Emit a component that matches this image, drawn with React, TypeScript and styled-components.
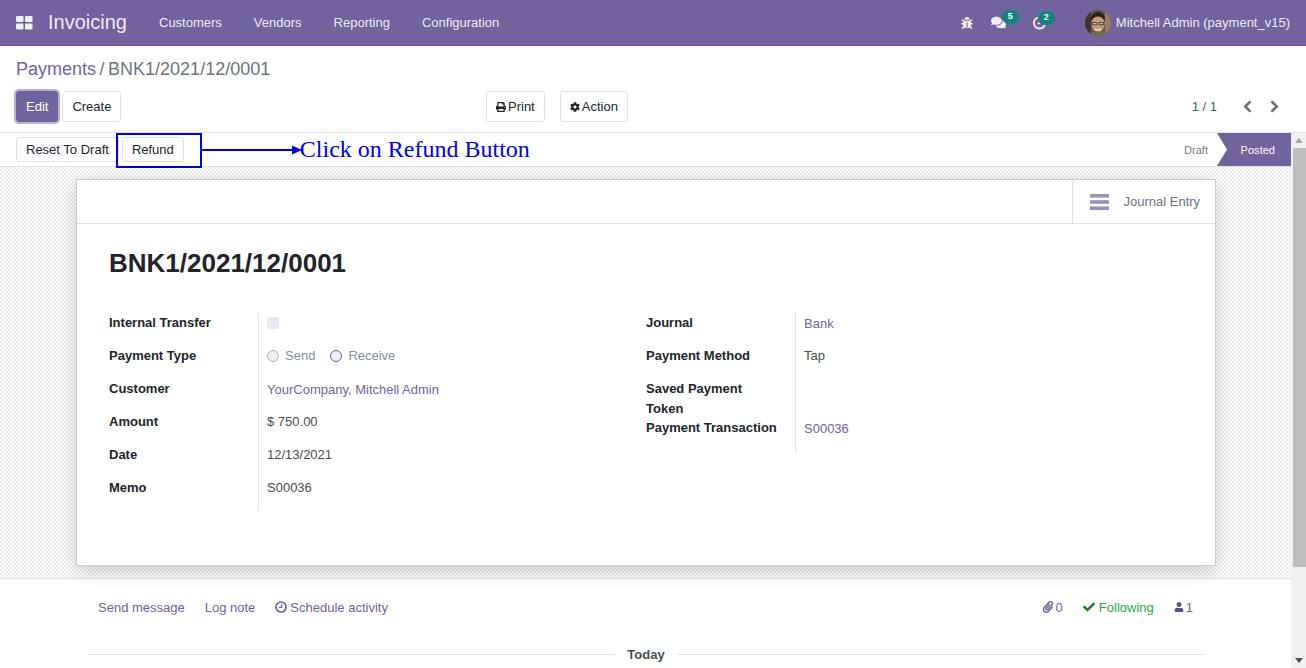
import React from "react";
import styled, { createGlobalStyle } from "styled-components";
import { FaBug, FaComments, FaPrint, FaCog, FaCheck, FaUser, FaPaperclip, FaChevronLeft, FaChevronRight } from "react-icons/fa";

const Global = createGlobalStyle`
  html, body { margin: 0; padding: 0; height: 100%; overflow: hidden; background: #fff; }
  body { font-family: "Liberation Sans", Arial, sans-serif; font-size: 13px; color: #4c4c4c; }
  * { box-sizing: border-box; }
`;

const Page = styled.div`width: 1306px; height: 668px; display: flex; flex-direction: column; overflow: hidden;`;

const Nav = styled.header`
  height: 46px; flex: none; background: #71639e; border-bottom: 1px solid #5f5286;
  display: flex; align-items: center; color: #fff; padding-left: 16px;
`;
const Brand = styled.span`font-size: 20px; color: rgba(255,255,255,.9); margin-left: 15px; margin-right: 32px; width: 79px;`;
const NavLink = styled.span`font-size: 13px; color: rgba(255,255,255,.9); margin-right: 32px;`;
const NavRight = styled.div`margin-left: auto; display: flex; align-items: center; padding-right: 16px; font-size: 13px;`;
const NavIcon = styled.span<{ $w: number }>`position: relative; display: inline-flex; align-items: center; width: ${p => p.$w}px; color: #f1eef7;`;
const Badge = styled.span<{ $left: number }>`
  position: absolute; left: ${p => p.$left}px; top: -5px; width: 17px; height: 14px; border-radius: 7px;
  background: #14827e; color: #fff; font-size: 9px; font-weight: 700; line-height: 13px; text-align: center;
`;
const Avatar = styled.svg`border-radius: 50%; margin-right: 5px; flex: none;`;
const UserName = styled.span`color: rgba(255,255,255,.9);`;

const Control = styled.section`
  height: 87px; flex: none; padding: 12px 16px 0; border-bottom: 1px solid #dee2e6; background: #fff;
`;
const Crumbs = styled.div`font-size: 18px; line-height: 22px; color: #6c757d; display: flex; gap: 3.5px;`;
const CrumbLink = styled.span`color: #71639e;`;
const CtlRow = styled.div`display: grid; grid-template-columns: 470px 1fr 1fr; margin-top: 11px; align-items: center;`;
const Group = styled.div`display: flex; align-items: center; gap: 4px;`;
const Actions = styled.div`display: flex; gap: 15px;`;
const Btn = styled.button<{ $primary?: boolean }>`
  height: 31px; padding: 0 9px; font: inherit; font-size: 13px; border-radius: 3px; display: inline-flex; align-items: center; gap: 2px;
  background: ${p => p.$primary ? "#71639e" : "#fff"};
  color: ${p => p.$primary ? "#fff" : "#212529"};
  border: 1px solid ${p => p.$primary ? "#71639e" : "#dee2e6"};
  box-shadow: ${p => p.$primary ? "0 0 0 2px #b8b1cf" : "none"};
`;
const Pager = styled.div`display: flex; justify-content: flex-end; align-items: center; padding-right: 9px;`;
const PagerText = styled.span`color: #3f6360; margin-right: 24px;`;
const PagerArrow = styled.span`
  display: inline-flex; color: #6b6b6b; margin-left: 14px;
  &:nth-child(2) { margin-left: 0; }
  svg { stroke: currentColor; stroke-width: 30px; }
`;

const Body = styled.div`flex: 1; display: flex; min-height: 0;`;
const Main = styled.div`flex: 1; min-width: 0; display: flex; flex-direction: column; overflow: hidden;`;

const Scroll = styled.div`width: 15px; flex: none; background: #f0f0f0; display: flex; flex-direction: column; align-items: center;`;
const ScrollArrow = styled.div<{ $down?: boolean }>`
  height: 15px; flex: none; display: flex; align-items: center; justify-content: center;
  &::before { content: ""; border-left: 4px solid transparent; border-right: 4px solid transparent;
    ${p => p.$down ? "border-top: 5px solid #505050;" : "border-bottom: 5px solid #a3a3a3;"} }
`;
const Thumb = styled.div`height: 419px; flex: none; background: #bdbdbd; margin: 0 0 0 2px; width: 13px;`;
const Gap = styled.div`flex: 1;`;

const StatusBar = styled.div`
  height: 34px; flex: none; display: flex; align-items: center; padding-left: 16px; gap: 3px; background: #fff; border-bottom: 1px solid #dee2e6;
`;
const StatusBtn = styled.button`
  height: 25px; padding: 0 9px; font: inherit; font-size: 13px; color: #212529; background: #fff; border: 1px solid #dee2e6; border-radius: 3px;
`;
const RefundBox = styled.div`
  border: 2px solid #0000e6; width: 86px; height: 35px; margin-top: 1px; margin-left: -6px; display: flex; align-items: center; padding: 0 0 2px 4px; flex: none; position: relative; z-index: 2;
`;
const RefundBtn = styled(StatusBtn)`width: 62px; padding: 0;`;
const ArrowSvg = styled.svg`flex: none; margin-left: -3px;`;
const Note = styled.span`font-family: "Liberation Serif", serif; font-size: 24px; color: #0000e6; white-space: nowrap; margin-left: -5px;`;
const Stages = styled.div`margin-left: auto; display: flex; height: 100%; align-items: center; font-size: 11.05px;`;
const StageDraft = styled.span`color: #7d7d7d; margin-right: 9px;`;
const StagePosted = styled.span`
  height: 33px; width: 74px; background: #71639e; color: #fff; display: flex; align-items: center; justify-content: flex-end; padding-right: 16px;
  clip-path: polygon(0 0, 100% 0, 100% 100%, 0 100%, 10px 50%);
`;

const Canvas = styled.div`
  position: relative; z-index: 1;
  height: 412px; flex: none; padding: 12px 0 0 76px; border-bottom: 1px solid #dee2e6;
  background-color: #f9f9f9;
  background-image: repeating-conic-gradient(#eeeeee 0 25%, #fdfdfd 0 50%);
  background-size: 4px 4px;
`;
const Sheet = styled.article`
  width: 1140px; height: 387px; background: #fff; border: 1px solid #c9ccd2; box-shadow: 0 5px 20px -1px rgba(0,0,0,.2);
  display: flex; flex-direction: column;
`;
const ButtonBox = styled.div`height: 44px; flex: none; display: flex; justify-content: flex-end; border-bottom: 1px solid #dee2e6;`;
const StatButton = styled.div`width: 143px; border-left: 1px solid #dee2e6; display: flex; align-items: center; padding-left: 17px; gap: 14.5px; color: #6c757d;`;
const SheetBody = styled.div`padding: 22px 32px 0;`;
const Title = styled.h1`margin: 0 0 33px; font-size: 26px; line-height: 34px; font-weight: 700; color: #212529;`;
const Columns = styled.div`display: grid; grid-template-columns: 537px 1fr;`;
const FieldGroup = styled.div``;
const Field = styled.div<{ $h?: number }>`display: grid; grid-template-columns: 149px 1fr; height: ${p => p.$h ?? 33}px;`;
const Label = styled.div<{ $w?: number }>`font-weight: 700; color: #212529; line-height: 20px; max-width: ${p => p.$w ?? 149}px;`;
const Value = styled.div<{ $link?: boolean; $top?: number }>`
  border-left: 1px solid #dee2e6; padding-left: 8px; padding-top: ${p => p.$top ?? 0}px; line-height: 20px;
  color: ${p => p.$link ? "#71639e" : "#4c4c4c"}; display: flex; align-items: flex-start;
`;
const CheckBox = styled.span`width: 12px; height: 12px; margin-top: 4px; border-radius: 2px; background: #e6eaef;`;
const RadioWrap = styled.label`display: inline-flex; align-items: center; height: 20px; color: #868e96; margin-right: 15px; gap: 6px;`;
const Radio = styled.span<{ $on?: boolean }>`
  width: 12px; height: 12px; border-radius: 50%; background: #eceef1;
  border: 1px solid ${p => p.$on ? "#71639e" : "#adb5bd"};
`;

const Chatter = styled.section`flex: 1; position: relative; background: #fff; padding: 18px 98px 0; min-height: 0;`;
const ChatTop = styled.div`display: flex; align-items: center; height: 20px;`;
const ChatLink = styled.span`color: #71639e; margin-right: 20px; display: inline-flex; align-items: center; gap: 3px;`;
const ChatRight = styled.div`margin-left: auto; display: flex; align-items: center; gap: 20px;`;
const ChatMeta = styled.span<{ $gap: number; $green?: boolean }>`display: inline-flex; align-items: center; gap: ${p => p.$gap}px; color: ${p => p.$green ? "#28a745" : "#71639e"};`;
const CheckMark = styled(FaCheck)`color: #1f7a2b;`;
const DarkUser = styled(FaUser)`color: #5d4f87;`;
const Today = styled.div`display: flex; align-items: center; margin: 27px 0 0 -10px; width: 1116px; gap: 12px; font-weight: 700; color: #495057; height: 20px;`;
const Rule = styled.span`flex: 1; height: 1px; background: #dee2e6;`;

function GridIcon() {
  return (
    <svg width="17" height="14" viewBox="0 0 17 14" fill="#f1eef7">
      <rect x="0" y="0" width="7.5" height="6" rx="1.2" />
      <rect x="9" y="0" width="7.5" height="6" rx="1.2" />
      <rect x="0" y="7.5" width="7.5" height="6" rx="1.2" />
      <rect x="9" y="7.5" width="7.5" height="6" rx="1.2" />
    </svg>
  );
}

function ActivityIcon() {
  return (
    <svg width="14" height="14" viewBox="0 0 14 14" fill="none" stroke="#f1eef7" strokeWidth="2">
      <path d="M6 1.6a5.6 5.6 0 1 0 7 6.4" />
      <path d="M5.6 7.4h2.6" strokeWidth="1.6" />
    </svg>
  );
}

function BarsIcon() {
  return (
    <svg width="19" height="16" viewBox="0 0 19 16" fill="#9a8fbf">
      <rect y="0" width="19" height="3.6" />
      <rect y="6.2" width="19" height="3.6" />
      <rect y="12.4" width="19" height="3.6" />
    </svg>
  );
}

function ClockIcon() {
  return (
    <svg width="12" height="12" viewBox="0 0 12 12" fill="none" stroke="#71639e">
      <circle cx="6" cy="6" r="5" strokeWidth="1.7" />
      <path d="M6.6 2.8v3.6H3.8" strokeWidth="1.3" />
    </svg>
  );
}

function Face() {
  return (
    <Avatar width="26" height="26" viewBox="0 0 26 26">
      <rect width="26" height="26" fill="#6b5540" />
      <rect x="0" y="0" width="6" height="26" fill="#3f352c" />
      <rect x="20" y="0" width="6" height="26" fill="#917f63" />
      <ellipse cx="13" cy="14" rx="6.5" ry="8" fill="#c99a7c" />
      <path d="M6 11c-.5-6 3-9 7-9s7.500 3 7 9c-2-3-4-4.500-7-4.500S8 8 6 11z" fill="#2a221c" />
      <path d="M7.500 12.500h4.500v2.300H7.500zM14 12.500h4.500v2.300H14z" fill="#e6d5c6" fillOpacity=".5" stroke="#2b2b2b" strokeWidth=".8" />
      <path d="M10 19c2 1.500 4.500 1.500 6 0" stroke="#f6efe6" strokeWidth="1.100" fill="none" />
      <path d="M3 26c1-3.500 5-4.500 10-4.500s9 1 10 4.500z" fill="#66704f" />
    </Avatar>
  );
}

export default function App() {
  return (
    <Page>
      <Global />
      <Nav>
        <GridIcon />
        <Brand>Invoicing</Brand>
        <NavLink>Customers</NavLink>
        <NavLink>Vendors</NavLink>
        <NavLink>Reporting</NavLink>
        <NavLink>Configuration</NavLink>
        <NavRight>
          <NavIcon $w={30}><FaBug size={12} /></NavIcon>
          <NavIcon $w={41}><FaComments size={15} /><Badge $left={11}>5</Badge></NavIcon>
          <NavIcon $w={53}><ActivityIcon /><Badge $left={6}>2</Badge></NavIcon>
          <Face />
          <UserName>Mitchell Admin (payment_v15)</UserName>
        </NavRight>
      </Nav>
      <Control>
        <Crumbs><CrumbLink>Payments</CrumbLink><span>/</span><span>BNK1/2021/12/0001</span></Crumbs>
        <CtlRow>
          <Group><Btn $primary>Edit</Btn><Btn>Create</Btn></Group>
          <Actions>
            <Btn><FaPrint size={10} />Print</Btn>
            <Btn><FaCog size={10} />Action</Btn>
          </Actions>
          <Pager>
            <PagerText>1 / 1</PagerText>
            <PagerArrow><FaChevronLeft size={13} /></PagerArrow>
            <PagerArrow><FaChevronRight size={13} /></PagerArrow>
          </Pager>
        </CtlRow>
      </Control>
      <Body>
        <Main>
          <StatusBar>
            <StatusBtn>Reset To Draft</StatusBtn>
            <RefundBox><RefundBtn>Refund</RefundBtn></RefundBox>
            <ArrowSvg width="100" height="10" viewBox="0 0 100 10">
              <path d="M0 5h92" stroke="#0000e6" strokeWidth="2" />
              <path d="M90 .5l10 4.500-10 4.500z" fill="#0000e6" />
            </ArrowSvg>
            <Note>Click on Refund Button</Note>
            <Stages>
              <StageDraft>Draft</StageDraft>
              <StagePosted>Posted</StagePosted>
            </Stages>
          </StatusBar>
          <Canvas>
            <Sheet>
              <ButtonBox>
                <StatButton><BarsIcon />Journal Entry</StatButton>
              </ButtonBox>
              <SheetBody>
                <Title>BNK1/2021/12/0001</Title>
                <Columns>
                  <FieldGroup>
                    <Field><Label>Internal Transfer</Label><Value><CheckBox /></Value></Field>
                    <Field>
                      <Label>Payment Type</Label>
                      <Value>
                        <RadioWrap><Radio />Send</RadioWrap>
                        <RadioWrap><Radio $on />Receive</RadioWrap>
                      </Value>
                    </Field>
                    <Field><Label>Customer</Label><Value $link $top={1}>YourCompany, Mitchell Admin</Value></Field>
                    <Field><Label>Amount</Label><Value>$ 750.00</Value></Field>
                    <Field><Label>Date</Label><Value>12/13/2021</Value></Field>
                    <Field><Label>Memo</Label><Value>S00036</Value></Field>
                  </FieldGroup>
                  <FieldGroup>
                    <Field><Label>Journal</Label><Value $link $top={1}>Bank</Value></Field>
                    <Field><Label>Payment Method</Label><Value>Tap</Value></Field>
                    <Field $h={39}><Label $w={120}>Saved Payment Token</Label><Value /></Field>
                    <Field><Label>Payment Transaction</Label><Value $link $top={1}>S00036</Value></Field>
                  </FieldGroup>
                </Columns>
              </SheetBody>
            </Sheet>
          </Canvas>
          <Chatter>
            <ChatTop>
              <ChatLink>Send message</ChatLink>
              <ChatLink>Log note</ChatLink>
              <ChatLink><ClockIcon />Schedule activity</ChatLink>
              <ChatRight>
                <ChatMeta $gap={2}><FaPaperclip size={12} />0</ChatMeta>
                <ChatMeta $gap={4} $green><CheckMark size={12} />Following</ChatMeta>
                <ChatMeta $gap={2}><DarkUser size={10} />1</ChatMeta>
              </ChatRight>
            </ChatTop>
            <Today><Rule />Today<Rule /></Today>
          </Chatter>
        </Main>
        <Scroll>
          <ScrollArrow />
          <Thumb />
          <Gap />
          <ScrollArrow $down />
        </Scroll>
      </Body>
    </Page>
  );
}
